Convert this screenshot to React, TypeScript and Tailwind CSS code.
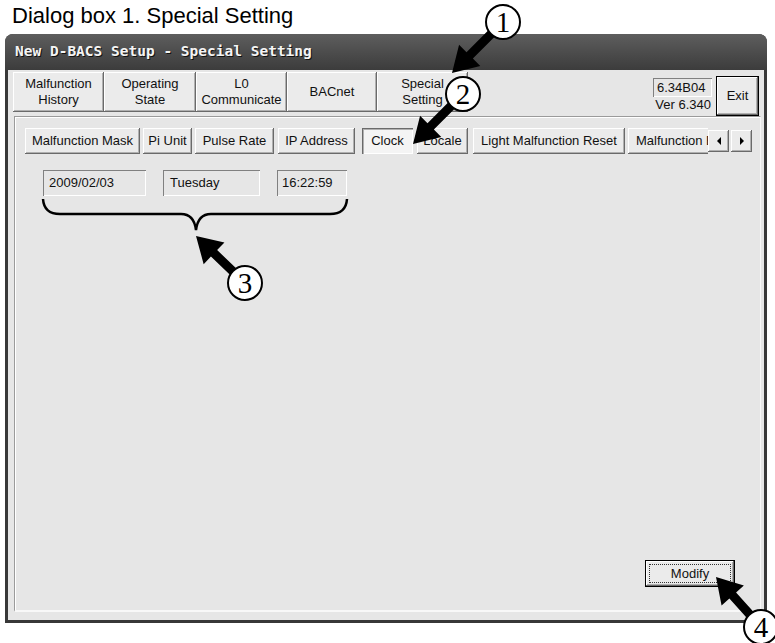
import React from 'react'

const raised =
  'bg-[#ebebeb] shadow-[inset_-1px_-1px_0_#6a6a6a,inset_1px_1px_0_#ffffff,inset_-2px_-2px_0_#b0b0b0]'
const sunken = 'shadow-[inset_1px_1px_0_#808080,inset_-1px_-1px_0_#ffffff]'

const topTabs = [
  { label: ['Malfunction', 'History'], w: 'w-[91px]' },
  { label: ['Operating', 'State'], w: 'w-[92px]' },
  { label: ['L0', 'Communicate'], w: 'w-[91px]' },
  { label: ['BACnet'], w: 'w-[90px]' },
  { label: ['Special', 'Setting'], w: 'w-[91px]' },
]

const subTabs = [
  { label: 'Malfunction Mask', w: 'w-[115px]', ml: 'ml-0' },
  { label: 'Pi Unit', w: 'w-[49px]', ml: 'ml-[3px]' },
  { label: 'Pulse Rate', w: 'w-[79px]', ml: 'ml-[3px]' },
  { label: 'IP Address', w: 'w-[77px]', ml: 'ml-[4px]' },
  { label: 'Clock', w: 'w-[51px]', ml: 'ml-[7px]', active: true },
  { label: 'Locale', w: 'w-[51px]', ml: 'ml-[4px]' },
  { label: 'Light Malfunction Reset', w: 'w-[152px]', ml: 'ml-[5px]' },
]

// arrow polygon from tip to tail
function arrow(tx: number, ty: number, sx: number, sy: number) {
  const dx = sx - tx
  const dy = sy - ty
  const len = Math.hypot(dx, dy)
  const ux = dx / len
  const uy = dy / len
  const px = -uy
  const py = ux
  const L = 25
  const H = 15
  const W = 4.5
  const bx = tx + ux * L
  const by = ty + uy * L
  const pts = [
    [tx, ty],
    [bx + px * H, by + py * H],
    [bx + px * W, by + py * W],
    [sx + px * W, sy + py * W],
    [sx - px * W, sy - py * W],
    [bx - px * W, by - py * W],
    [bx - px * H, by - py * H],
  ]
  return pts.map((p) => p.join(',')).join(' ')
}

function Marker({ x, y, n }: { x: number; y: number; n: string }) {
  return (
    <g>
      <circle cx={x} cy={y} r={17} fill="#fff" stroke="#000" strokeWidth={2} />
      <text
        x={x}
        y={y + 10}
        textAnchor="middle"
        fontSize={29}
        fontFamily="'Liberation Serif', serif"
        fill="#000"
      >
        {n}
      </text>
    </g>
  )
}

export default function App() {
  return (
    <div className="relative w-[775px] h-[643px] overflow-hidden bg-white font-['Liberation_Sans',Arial,sans-serif] text-black">
      <div className="h-[34px] pl-[12px] pt-[3px] text-[22px] leading-[26px]">Dialog box 1. Special Setting</div>

      {/* window */}
      <div className="ml-[5px] w-[762px] h-[589px] flex flex-col rounded-t-[8px] bg-[#383838] px-[3px] pb-[3px]">
        <div className="h-[36px] -mx-[3px] rounded-t-[8px] bg-linear-to-b from-[#5e5e5e] to-[#3c3c3c] flex items-center pl-[10px]">
          <span className="font-['DejaVu_Sans_Mono',monospace] font-bold text-[14.5px] text-[#f4f4f4] [text-shadow:1px_1px_0_#111]">
            New D-BACS Setup - Special Setting
          </span>
        </div>

        <div className="flex-1 flex flex-col bg-[#e6e6e6] text-[13px] text-[#111]">
          {/* top row */}
          <div className="flex items-start pt-[2px] pl-[5px] pr-[5px] h-[42px]">
            {topTabs.map((t) => (
              <div
                key={t.label.join(' ')}
                className={`${t.w} h-[40px] ${raised} flex flex-col items-center justify-center leading-[16px]`}
              >
                {t.label.map((l) => (
                  <span key={l}>{l}</span>
                ))}
              </div>
            ))}
            <div className="flex-1" />
            <div className="flex flex-col items-end mt-[6px] mr-[4px]">
              <div className={`w-[59px] h-[19px] ${sunken} pl-[4px] leading-[19px]`}>6.34B04</div>
              <div className="leading-[14px] mt-[1px] pr-[1px]">Ver 6.340</div>
            </div>
            <div className="mt-[4px] w-[43px] h-[40px] border border-black">
              <div className={`w-full h-full ${raised} flex items-center justify-center`}>Exit</div>
            </div>
          </div>

          {/* tab page */}
          <div className="flex-1 flex flex-col ml-[6px] mr-[3px] mt-[4px] mb-[8px] border-t border-l border-[#9a9a9a] border-b-2 border-r border-b-[#f8f8f8] border-r-[#f8f8f8] shadow-[inset_1px_1px_0_#ffffff]">
            <div className="flex items-center pt-[11px] pl-[10px]">
              {subTabs.map((t) => (
                <div
                  key={t.label}
                  className={`${t.w} ${t.ml} h-[26px] flex items-center justify-center ${
                    t.active
                      ? 'bg-[#f4f4f4] shadow-[inset_1px_1px_0_#6a6a6a,inset_2px_2px_0_#b0b0b0,inset_-1px_-1px_0_#ffffff]'
                      : raised
                  }`}
                >
                  {t.label}
                </div>
              ))}
              <div className="ml-[3px] w-[80px] h-[26px] overflow-hidden">
                <div className={`w-[120px] h-[26px] ${raised} flex items-center pl-[8px] whitespace-nowrap`}>
                  Malfunction E
                </div>
              </div>
              <div className={`w-[21px] h-[22px] ${raised} flex items-center justify-center`}>
                <span className="w-0 h-0 border-y-[4px] border-y-transparent border-r-[4px] border-r-black" />
              </div>
              <div className={`ml-[2px] w-[21px] h-[22px] ${raised} flex items-center justify-center`}>
                <span className="w-0 h-0 border-y-[4px] border-y-transparent border-l-[4px] border-l-black" />
              </div>
            </div>

            <div className="flex items-center mt-[16px] pl-[28px]">
              <div className={`w-[103px] h-[26px] ${sunken} pl-[6px] leading-[26px]`}>2009/02/03</div>
              <div className={`ml-[17px] w-[97px] h-[26px] ${sunken} pl-[7px] leading-[26px]`}>Tuesday</div>
              <div className={`ml-[17px] w-[70px] h-[26px] ${sunken} pl-[5px] leading-[26px]`}>16:22:59</div>
            </div>

            <div className="flex-1" />
            <div className="flex justify-end pr-[25px] pb-[23px]">
              <div className="w-[90px] h-[27px] border border-black">
                <div className={`w-full h-full ${raised} p-[3px]`}>
                  <div className="w-full h-full border border-dotted border-[#333] flex items-center justify-center">
                    Modify
                  </div>
                </div>
              </div>
            </div>
          </div>
        </div>
      </div>

      {/* annotations */}
      <svg className="absolute inset-0 pointer-events-none" width={775} height={643} viewBox="0 0 775 643">
        <path
          d="M43 199 Q44 214 60 214 L181 214 Q194 214 196 230 Q198 214 211 214 L330 214 Q346 214 347 199"
          fill="none"
          stroke="#000"
          strokeWidth={2.5}
        />
        <polygon points={arrow(452, 73, 503, 22)} fill="#000" />
        <polygon points={arrow(413, 144, 463, 94)} fill="#000" />
        <polygon points={arrow(196, 236, 245, 283)} fill="#000" />
        <polygon points={arrow(716, 577, 761, 627)} fill="#000" />
        <Marker x={503} y={22} n="1" />
        <Marker x={463} y={94} n="2" />
        <Marker x={245} y={283} n="3" />
        <Marker x={761} y={627} n="4" />
      </svg>
    </div>
  )
}
